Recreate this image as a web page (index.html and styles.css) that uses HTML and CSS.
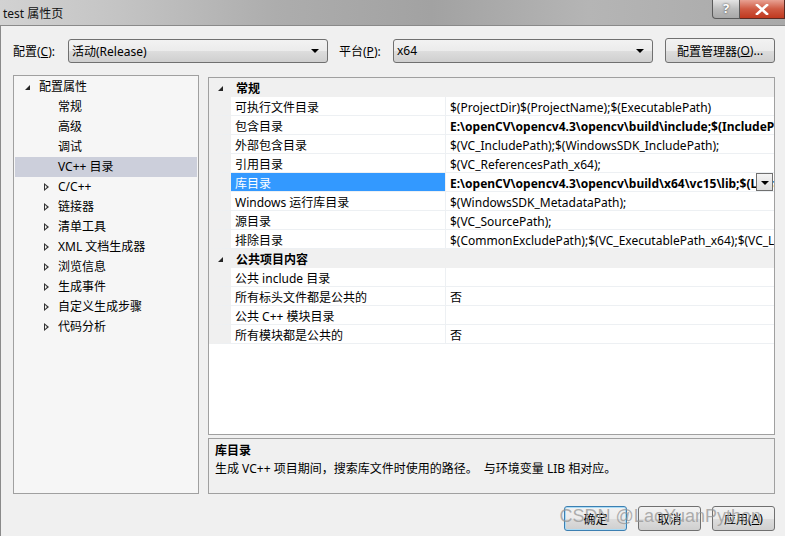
FILE: index.html
```html
<!DOCTYPE html>
<html lang="zh-CN">
<head>
    <meta charset="UTF-8">
    <title>test 属性页</title>
    <link rel="stylesheet" href="styles.css">
</head>
<body>
<div class="window">
    <div class="titlebar">
        <span class="title">test 属性页</span>
        <div class="caption-btns">
            <span class="cap-help">?</span>
            <span class="cap-close">
                <svg width="14" height="11" viewBox="0 0 14 11"><path d="M2 1 L12 10 M12 1 L2 10" stroke="#fff" stroke-width="2.6" stroke-linecap="square"/></svg>
            </span>
        </div>
    </div>
    <div class="body">
        <div class="config-row">
            <label class="lbl">配置(<u>C</u>):</label>
            <div class="combo combo-config"><span>活动(Release)</span><i class="drop"></i></div>
            <label class="lbl lbl-platform">平台(<u>P</u>):</label>
            <div class="combo combo-platform"><span>x64</span><i class="drop"></i></div>
            <div class="btn btn-manager">配置管理器(<u>O</u>)...</div>
        </div>

        <div class="main">
            <div class="tree">
                <div class="node root"><i class="exp"></i>配置属性</div>
                <div class="node leaf">常规</div>
                <div class="node leaf">高级</div>
                <div class="node leaf">调试</div>
                <div class="node leaf sel">VC++ 目录</div>
                <div class="node coll"><i class="col"></i>C/C++</div>
                <div class="node coll"><i class="col"></i>链接器</div>
                <div class="node coll"><i class="col"></i>清单工具</div>
                <div class="node coll"><i class="col"></i>XML 文档生成器</div>
                <div class="node coll"><i class="col"></i>浏览信息</div>
                <div class="node coll"><i class="col"></i>生成事件</div>
                <div class="node coll"><i class="col"></i>自定义生成步骤</div>
                <div class="node coll"><i class="col"></i>代码分析</div>
            </div>

            <div class="right">
                <div class="grid">
                    <div class="cat"><i class="exp"></i>常规</div>
                    <div class="prop"><span class="name">可执行文件目录</span><span class="val">$(ProjectDir)$(ProjectName);$(ExecutablePath)</span></div>
                    <div class="prop"><span class="name">包含目录</span><span class="val b">E:\openCV\opencv4.3\opencv\build\include;$(IncludePath)</span></div>
                    <div class="prop"><span class="name">外部包含目录</span><span class="val">$(VC_IncludePath);$(WindowsSDK_IncludePath);</span></div>
                    <div class="prop"><span class="name">引用目录</span><span class="val">$(VC_ReferencesPath_x64);</span></div>
                    <div class="prop active"><span class="name">库目录</span><span class="val b">E:\openCV\opencv4.3\opencv\build\x64\vc15\lib;$(LibraryPath)<i class="cell-drop"></i></span></div>
                    <div class="prop"><span class="name">Windows 运行库目录</span><span class="val">$(WindowsSDK_MetadataPath);</span></div>
                    <div class="prop"><span class="name">源目录</span><span class="val">$(VC_SourcePath);</span></div>
                    <div class="prop"><span class="name">排除目录</span><span class="val">$(CommonExcludePath);$(VC_ExecutablePath_x64);$(VC_LibraryPath_x64);</span></div>
                    <div class="cat"><i class="exp"></i>公共项目内容</div>
                    <div class="prop"><span class="name">公共 include 目录</span><span class="val"></span></div>
                    <div class="prop"><span class="name">所有标头文件都是公共的</span><span class="val">否</span></div>
                    <div class="prop"><span class="name">公共 C++ 模块目录</span><span class="val"></span></div>
                    <div class="prop"><span class="name">所有模块都是公共的</span><span class="val">否</span></div>
                </div>
                <div class="desc">
                    <div class="desc-title">库目录</div>
                    <div class="desc-text">生成 VC++ 项目期间，搜索库文件时使用的路径。&nbsp;&nbsp;与环境变量 LIB 相对应。</div>
                </div>
            </div>
        </div>

        <div class="buttons">
            <div class="btn btn-ok">确定</div>
            <div class="btn">取消</div>
            <div class="btn">应用(<u>A</u>)</div>
            <span class="watermark">CSDN @LaoYuanPython</span>
        </div>
    </div>
</div>
</body>
</html>
```

FILE: styles.css
```css
html,body{
    width: 100%;
    height: 100%;
    overflow: hidden;
}
*{
    margin:0;
    padding:0;
    box-sizing: border-box;
}
body{
    font-family: "Noto Sans", "Noto Sans CJK SC", sans-serif;
    font-size: 12px;
    color: #000;
    background: #f0f0f0;
}
u{
    text-decoration: underline;
}
.window{
    width: 785px;
    height: 536px;
    display: flex;
    flex-direction: column;
}
.titlebar{
    height: 26px;
    flex: none;
    display: flex;
    justify-content: space-between;
    background: linear-gradient(90deg, #d2d2d2 0%, #c4c4c4 15%, #adadad 35%, #a2a2a2 55%, #b5b5b5 75%, #a9a9a9 100%);
    border-bottom: 1px solid #8a8a8a;
}
.title{
    padding: 4px 0 0 3px;
    font-size: 12px;
    color: #111;
}
.caption-btns{
    display: flex;
    height: 19px;
}
.cap-help{
    width: 28px;
    height: 19px;
    border: 1px solid #5a5a5a;
    border-top: none;
    border-radius: 0 0 0 4px;
    background: linear-gradient(#e4e4e4, #bcbcbc 50%, #a8a8a8);
    text-align: center;
    font-weight: bold;
    font-size: 13px;
    line-height: 17px;
    color: #fff;
    text-shadow: 0 0 2px #333;
}
.cap-close{
    width: 45px;
    height: 19px;
    border: 1px solid #5a2a22;
    border-top: none;
    border-left: none;
    background: linear-gradient(#e8a193, #cf5a43 50%, #c0391f);
    display: flex;
    align-items: center;
    justify-content: center;
}
.body{
    flex: 1;
    display: flex;
    flex-direction: column;
    padding: 12px 10px 0 12px;
    border-left: 1px solid #8a8a8a;
    background: #f0f0f0;
    min-width: 0;
}
.config-row{
    height: 25px;
    display: flex;
    align-items: center;
}
.lbl{
    width: 55px;
    flex: none;
}
.lbl-platform{
    margin-left: 11px;
    width: 54px;
}
.combo{
    height: 24px;
    border: 1px solid #707070;
    border-radius: 3px;
    background: linear-gradient(#f2f2f2, #ebebeb 50%, #dddddd 51%, #cfcfcf);
    display: flex;
    align-items: center;
    justify-content: space-between;
    padding: 0 8px 0 3px;
}
.combo-config{
    width: 260px;
}
.combo-platform{
    width: 260px;
}
.drop{
    width: 0;
    height: 0;
    border-left: 4px solid transparent;
    border-right: 4px solid transparent;
    border-top: 4px solid #000;
}
.btn{
    height: 25px;
    border: 1px solid #707070;
    border-radius: 3px;
    background: linear-gradient(#f2f2f2, #ebebeb 50%, #dddddd 51%, #cfcfcf);
    display: flex;
    align-items: center;
    justify-content: center;
    width: 63px;
}
.btn-manager{
    width: 110px;
    margin-left: 12px;
}
.main{
    display: flex;
    margin-top: 12px;
    height: 419px;
    gap: 9px;
    min-width: 0;
}
.tree{
    width: 186px;
    height: 419px;
    border: 1px solid #a0a0a0;
    background: #f6f6f6;
    padding-top: 1px;
    flex: none;
}
.node{
    height: 20px;
    line-height: 20px;
    display: flex;
    align-items: center;
    padding-left: 44px;
    white-space: nowrap;
}
.node.root{
    padding-left: 11px;
}
.node.coll{
    padding-left: 30px;
}
.sel{
    background: #cccfdb;
    margin: 0 1px;
    padding-left: 43px;
}
.exp{
    width: 0;
    height: 0;
    border-left: 5px solid transparent;
    border-bottom: 5px solid #262626;
    margin-right: 9px;
    margin-top: 1px;
}
.col{
    width: 0;
    height: 0;
    border-top: 4px solid transparent;
    border-bottom: 4px solid transparent;
    border-left: 5px solid #333;
    margin-right: 9px;
    position: relative;
}
.col::after{
    content: "";
    position: absolute;
    left: -4px;
    top: -2px;
    border-top: 2px solid transparent;
    border-bottom: 2px solid transparent;
    border-left: 2px solid #f6f6f6;
}
.right{
    flex: 1;
    min-width: 0;
    display: flex;
    flex-direction: column;
    gap: 3px;
}
.grid{
    height: 358px;
    margin-top: 2px;
    border: 1px solid #a0a0a0;
    background: #fff;
    overflow: hidden;
}
.cat{
    height: 19px;
    display: flex;
    align-items: center;
    background: #f0f0f0;
    font-weight: bold;
    padding-left: 9px;
}
.cat .exp{
    margin-right: 13px;
}
.prop{
    height: 19px;
    display: flex;
    border-left: 22px solid #f0f0f0;
    border-bottom: 1px solid #edf0f3;
}
.prop .name{
    width: 215px;
    flex: none;
    padding: 2px 0 0 4px;
    line-height: 17px;
    border-right: 1px solid #edf0f3;
    white-space: nowrap;
}
.prop .val{
    flex: 1;
    min-width: 0;
    padding: 2px 0 0 4px;
    line-height: 17px;
    white-space: nowrap;
    overflow: hidden;
    position: relative;
}
.b{
    font-weight: bold;
}
.active .name{
    background: #3399ff;
    color: #fff;
}
.cell-drop{
    position: absolute;
    right: 1px;
    top: 0;
    width: 17px;
    height: 18px;
    border: 1px solid #707070;
    background: linear-gradient(#f4f4f4, #dcdcdc);
}
.cell-drop::after{
    content: "";
    position: absolute;
    left: 4px;
    top: 7px;
    border-left: 4px solid transparent;
    border-right: 4px solid transparent;
    border-top: 4px solid #000;
}
.desc{
    height: 56px;
    border: 1px solid #a0a0a0;
    background: #f0f0f0;
    padding: 3px 6px;
}
.desc-title{
    font-weight: bold;
    line-height: 18px;
}
.desc-text{
    line-height: 18px;
}
.buttons{
    display: flex;
    justify-content: flex-end;
    gap: 11px;
    margin-top: 12px;
    position: relative;
}
.btn-ok{
    border-color: #3c7fb1;
    box-shadow: inset 0 0 0 1px #a9dbf6;
}
.watermark{
    position: absolute;
    right: 14px;
    top: 0;
    font-family: "Liberation Sans", sans-serif;
    font-size: 18px;
    color: rgba(150,150,150,0.75);
    pointer-events: none;
}
```
